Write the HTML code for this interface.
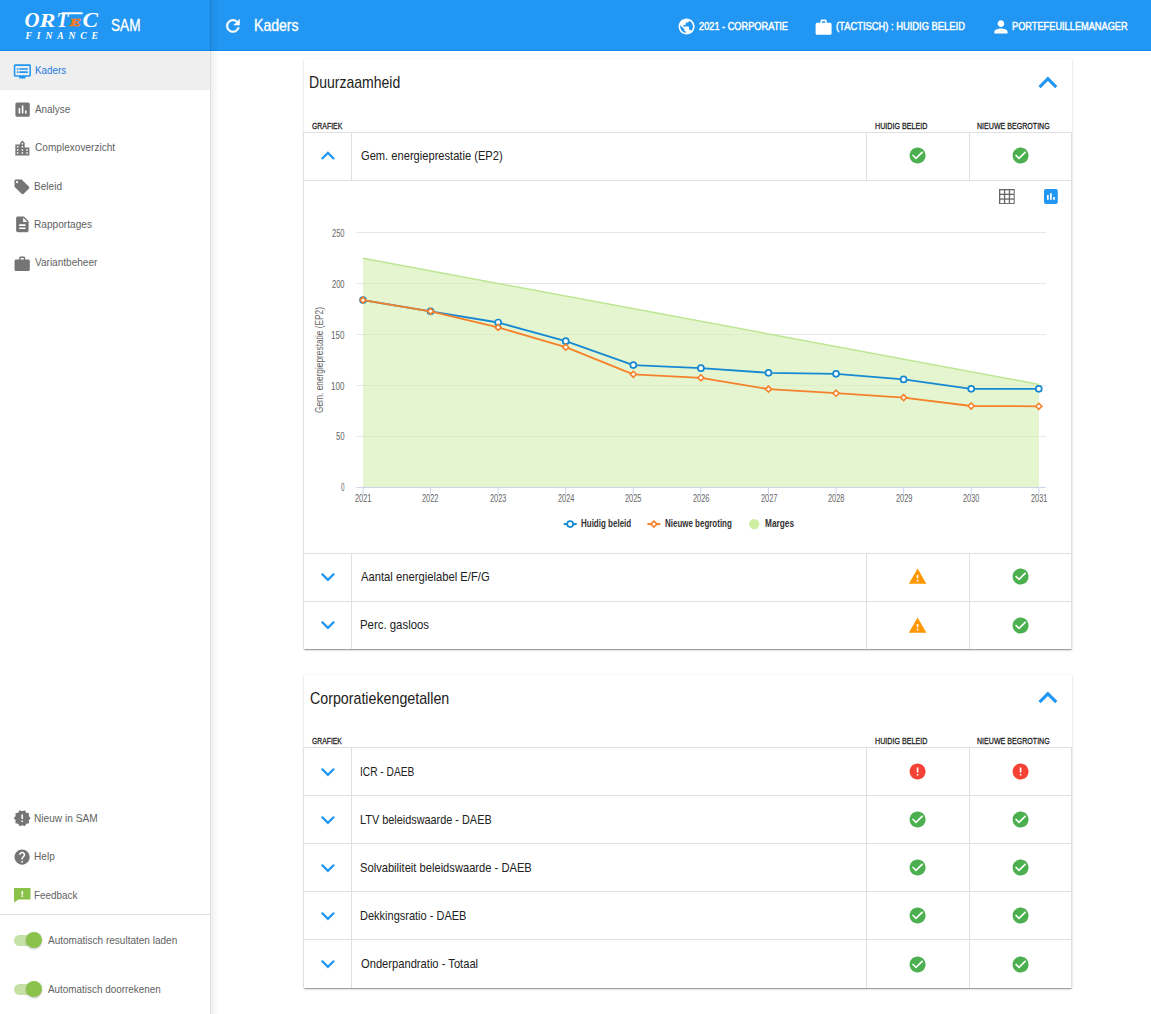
<!DOCTYPE html>
<html><head><meta charset="utf-8"><title>SAM - Kaders</title>
<style>
html,body{margin:0;padding:0;}
body{width:1151px;height:1014px;overflow:hidden;position:relative;background:#fff;font-family:"Liberation Sans",sans-serif;}
.a{position:absolute;}
.t{position:absolute;white-space:pre;line-height:20px;transform-origin:0 0;}
svg{position:absolute;overflow:visible;}
</style></head><body>

<div class="a" style="left:0;top:0;width:1151px;height:50px;background:#2196f3"></div>
<div class="a" style="left:0;top:50px;width:1151px;height:1px;background:#1387e6"></div>
<div class="a" style="left:0;top:51px;width:210px;height:963px;background:#fff"></div>
<div class="a" style="left:0;top:51px;width:210px;height:39px;background:#efefef"></div>
<div class="a" style="left:210px;top:0;width:1px;height:1014px;background:rgba(0,0,0,0.13)"></div>
<div class="a" style="left:211px;top:0;width:8px;height:1014px;background:linear-gradient(to right,rgba(0,0,0,0.06),rgba(0,0,0,0))"></div>
<div class="a" style="left:0;top:914px;width:210px;height:1px;background:#dedede"></div>
<div class="a" style="left:304px;top:59px;width:768px;height:590px;background:#fff;box-shadow:0 2px 1px -1px rgba(0,0,0,0.2),0 1px 1px 0 rgba(0,0,0,0.14),0 1px 3px 0 rgba(0,0,0,0.12)"></div>
<div class="a" style="left:304px;top:675px;width:768px;height:313px;background:#fff;box-shadow:0 2px 1px -1px rgba(0,0,0,0.2),0 1px 1px 0 rgba(0,0,0,0.14),0 1px 3px 0 rgba(0,0,0,0.12)"></div>
<div class="a" style="left:303px;top:132px;width:769px;height:1px;background:#e0e0e0"></div>
<div class="a" style="left:303px;top:180px;width:769px;height:1px;background:#e0e0e0"></div>
<div class="a" style="left:303px;top:553px;width:769px;height:1px;background:#e0e0e0"></div>
<div class="a" style="left:303px;top:601px;width:769px;height:1px;background:#e0e0e0"></div>
<div class="a" style="left:303px;top:132px;width:1px;height:48px;background:#e0e0e0"></div>
<div class="a" style="left:351px;top:132px;width:1px;height:48px;background:#e0e0e0"></div>
<div class="a" style="left:866px;top:132px;width:1px;height:48px;background:#e0e0e0"></div>
<div class="a" style="left:969px;top:132px;width:1px;height:48px;background:#e0e0e0"></div>
<div class="a" style="left:1071px;top:132px;width:1px;height:48px;background:#e0e0e0"></div>
<div class="a" style="left:303px;top:553px;width:1px;height:96px;background:#e0e0e0"></div>
<div class="a" style="left:351px;top:553px;width:1px;height:96px;background:#e0e0e0"></div>
<div class="a" style="left:866px;top:553px;width:1px;height:96px;background:#e0e0e0"></div>
<div class="a" style="left:969px;top:553px;width:1px;height:96px;background:#e0e0e0"></div>
<div class="a" style="left:1071px;top:553px;width:1px;height:96px;background:#e0e0e0"></div>
<div class="a" style="left:303px;top:180px;width:1px;height:373px;background:#e0e0e0"></div>
<div class="a" style="left:1071px;top:180px;width:1px;height:373px;background:#e0e0e0"></div>
<div class="a" style="left:303px;top:747px;width:769px;height:1px;background:#e0e0e0"></div>
<div class="a" style="left:303px;top:795px;width:769px;height:1px;background:#e0e0e0"></div>
<div class="a" style="left:303px;top:843px;width:769px;height:1px;background:#e0e0e0"></div>
<div class="a" style="left:303px;top:891px;width:769px;height:1px;background:#e0e0e0"></div>
<div class="a" style="left:303px;top:939px;width:769px;height:1px;background:#e0e0e0"></div>
<div class="a" style="left:303px;top:747px;width:1px;height:241px;background:#e0e0e0"></div>
<div class="a" style="left:351px;top:747px;width:1px;height:241px;background:#e0e0e0"></div>
<div class="a" style="left:866px;top:747px;width:1px;height:241px;background:#e0e0e0"></div>
<div class="a" style="left:969px;top:747px;width:1px;height:241px;background:#e0e0e0"></div>
<div class="a" style="left:1071px;top:747px;width:1px;height:241px;background:#e0e0e0"></div>
<svg style="left:223px;top:15.7px" width="19.92" height="19.92" viewBox="0 0 24 24"><path d="M17.65 6.35C16.2 4.9 14.21 4 12 4c-4.42 0-7.99 3.58-7.99 8s3.57 8 7.99 8c3.73 0 6.84-2.55 7.73-6h-2.08c-.82 2.33-3.04 4-5.65 4-3.31 0-6-2.69-6-6s2.69-6 6-6c1.66 0 3.14.69 4.22 1.78L13 11h7V4l-2.35 2.35z" fill="#fff" stroke="#fff" stroke-width="0.6"/></svg>
<svg style="left:676.9px;top:17.4px" width="19.2" height="19.2" viewBox="0 0 24 24"><path d="M12 2C6.48 2 2 6.48 2 12s4.48 10 10 10 10-4.48 10-10S17.52 2 12 2zm-1 17.93c-3.95-.49-7-3.85-7-7.93 0-.62.08-1.21.21-1.79L9 15v1c0 1.1.9 2 2 2v1.93zm6.9-2.54c-.26-.81-1-1.39-1.9-1.39h-1v-3c0-.55-.45-1-1-1H8v-2h2c.55 0 1-.45 1-1V7h2c1.1 0 2-.9 2-2v-.41c2.93 1.19 5 4.06 5 7.41 0 2.08-.8 3.97-2.1 5.39z" fill="#fff"/></svg>
<svg style="left:813.9px;top:17.5px" width="19.2" height="19.2" viewBox="0 0 24 24"><path d="M20 6h-4V4c0-1.11-.89-2-2-2h-4c-1.11 0-2 .89-2 2v2H4c-1.11 0-1.99.89-1.99 2L2 19c0 1.11.89 2 2 2h16c1.11 0 2-.89 2-2V8c0-1.11-.89-2-2-2zm-6 0h-4V4h4v2z" fill="#fff"/></svg>
<svg style="left:990.7px;top:16.7px" width="19.92" height="19.92" viewBox="0 0 24 24"><path d="M12 12c2.21 0 4-1.79 4-4s-1.79-4-4-4-4 1.79-4 4 1.79 4 4 4zm0 2c-2.67 0-8 1.34-8 4v2h16v-2c0-2.66-5.33-4-8-4z" fill="#fff"/></svg>
<svg style="left:13.2px;top:61.6px" width="18.72" height="18.72" viewBox="0 0 24 24"><path d="M21 3H3c-1.1 0-2 .9-2 2v12c0 1.1.9 2 2 2h5v2h8v-2h5c1.1 0 1.99-.9 1.99-2L23 5c0-1.1-.9-2-2-2zm0 14H3V5h18v12zm-2-9H8v2h11V8zm0 4H8v2h11v-2zM7 8H5v2h2V8zm0 4H5v2h2v-2z" fill="#2196f3"/></svg>
<svg style="left:12.6px;top:99.6px" width="19.2" height="19.2" viewBox="0 0 24 24"><path d="M19 3H5c-1.1 0-2 .9-2 2v14c0 1.1.9 2 2 2h14c1.1 0 2-.9 2-2V5c0-1.1-.9-2-2-2zM9 17H7v-7h2v7zm4 0h-2V7h2v10zm4 0h-2v-4h2v4z" fill="#757575"/></svg>
<svg style="left:13px;top:139.1px" width="18.72" height="18.72" viewBox="0 0 24 24"><path d="M15 11V5l-3-3-3 3v2H3v14h18V11h-6zm-8 8H5v-2h2v2zm0-4H5v-2h2v2zm0-4H5V9h2v2zm6 8h-2v-2h2v2zm0-4h-2v-2h2v2zm0-4h-2V9h2v2zm0-4h-2V5h2v2zm6 12h-2v-2h2v2zm0-4h-2v-2h2v2z" fill="#757575"/></svg>
<svg style="left:13.4px;top:177.6px" width="17.76" height="17.76" viewBox="0 0 24 24"><path d="M21.41 11.58l-9-9C12.05 2.22 11.55 2 11 2H4c-1.1 0-2 .9-2 2v7c0 .55.22 1.05.59 1.42l9 9c.36.36.86.58 1.41.58.55 0 1.05-.22 1.41-.59l7-7c.37-.36.59-.86.59-1.41 0-.55-.23-1.06-.59-1.42zM5.5 7C4.67 7 4 6.33 4 5.5S4.67 4 5.5 4 7 4.67 7 5.5 6.33 7 5.5 7z" fill="#757575"/></svg>
<svg style="left:12.9px;top:215.3px" width="18.72" height="18.72" viewBox="0 0 24 24"><path d="M14 2H6c-1.1 0-1.99.9-1.99 2L4 20c0 1.1.89 2 1.99 2H18c1.1 0 2-.9 2-2V8l-6-6zm2 16H8v-2h8v2zm0-4H8v-2h8v2zm-3-5V3.5L18.5 9H13z" fill="#757575"/></svg>
<svg style="left:13.2px;top:254.5px" width="18.36" height="18.36" viewBox="0 0 24 24"><path d="M20 6h-4V4c0-1.11-.89-2-2-2h-4c-1.11 0-2 .89-2 2v2H4c-1.11 0-1.99.89-1.99 2L2 19c0 1.11.89 2 2 2h16c1.11 0 2-.89 2-2V8c0-1.11-.89-2-2-2zm-6 0h-4V4h4v2z" fill="#757575"/></svg>
<svg style="left:13.2px;top:808.8px" width="18.48" height="18.48" viewBox="0 0 24 24"><path d="M23 12l-2.44-2.78.34-3.68-3.61-.82-1.89-3.18L12 3 8.6 1.54 6.71 4.72l-3.61.81.34 3.68L1 12l2.44 2.78-.34 3.69 3.61.82 1.89 3.18L12 21l3.4 1.46 1.89-3.18 3.61-.82-.34-3.68L23 12zm-10 5h-2v-2h2v2zm0-4h-2V7h2v6z" fill="#757575"/></svg>
<svg style="left:13px;top:848.2px" width="18.24" height="18.24" viewBox="0 0 24 24"><path d="M12 2C6.48 2 2 6.48 2 12s4.48 10 10 10 10-4.48 10-10S17.52 2 12 2zm1 17h-2v-2h2v2zm2.07-7.75l-.9.92C13.45 12.9 13 13.5 13 15h-2v-.5c0-1.1.45-2.1 1.17-2.83l1.24-1.26c.37-.36.59-.86.59-1.41 0-1.1-.9-2-2-2s-2 .9-2 2H8c0-2.21 1.79-4 4-4s4 1.79 4 4c0 .88-.36 1.68-.93 2.25z" fill="#757575"/></svg>
<svg style="left:0;top:0" width="1" height="1"></svg>
<svg style="left:14px;top:888px" width="17" height="15" viewBox="0 0 17 15"><path d="M0 0H16.5V11.5H4.5L0 14.5Z" fill="#8bc34a"/><rect x="7.5" y="3.1" width="1.6" height="3.5" fill="#fff"/><rect x="7.5" y="7.5" width="1.6" height="1.4" fill="#fff"/></svg>
<div class="a" style="left:14px;top:934.5px;width:26px;height:11px;border-radius:6px;background:#c5e1a5"></div>
<div class="a" style="left:26px;top:932px;width:16px;height:16px;border-radius:8px;background:#8bc34a;box-shadow:0 1px 2px rgba(0,0,0,0.25)"></div>
<div class="a" style="left:14px;top:983.5px;width:26px;height:11px;border-radius:6px;background:#c5e1a5"></div>
<div class="a" style="left:26px;top:981px;width:16px;height:16px;border-radius:8px;background:#8bc34a;box-shadow:0 1px 2px rgba(0,0,0,0.25)"></div>
<svg style="left:1028.75px;top:64.2px" width="37.8" height="37.8" viewBox="0 0 24 24"><path d="M12 8l-6 6 1.41 1.41L12 10.83l4.59 4.58L18 14z" fill="#2196f3"/></svg>
<svg style="left:1028.75px;top:678.6px" width="37.8" height="37.8" viewBox="0 0 24 24"><path d="M12 8l-6 6 1.41 1.41L12 10.83l4.59 4.58L18 14z" fill="#2196f3"/></svg>
<svg style="left:313.7px;top:141.7px" width="27.84" height="27.84" viewBox="0 0 24 24"><path d="M12 8l-6 6 1.41 1.41L12 10.83l4.59 4.58L18 14z" fill="#2196f3"/></svg>
<svg style="left:313.8px;top:562.54px" width="27.84" height="27.84" viewBox="0 0 24 24"><path d="M16.59 8.59L12 13.17 7.41 8.59 6 10l6 6 6-6z" fill="#2196f3"/></svg>
<svg style="left:313.8px;top:610.54px" width="27.84" height="27.84" viewBox="0 0 24 24"><path d="M16.59 8.59L12 13.17 7.41 8.59 6 10l6 6 6-6z" fill="#2196f3"/></svg>
<svg style="left:313.8px;top:757.54px" width="27.84" height="27.84" viewBox="0 0 24 24"><path d="M16.59 8.59L12 13.17 7.41 8.59 6 10l6 6 6-6z" fill="#2196f3"/></svg>
<svg style="left:313.8px;top:805.54px" width="27.84" height="27.84" viewBox="0 0 24 24"><path d="M16.59 8.59L12 13.17 7.41 8.59 6 10l6 6 6-6z" fill="#2196f3"/></svg>
<svg style="left:313.8px;top:853.54px" width="27.84" height="27.84" viewBox="0 0 24 24"><path d="M16.59 8.59L12 13.17 7.41 8.59 6 10l6 6 6-6z" fill="#2196f3"/></svg>
<svg style="left:313.8px;top:901.54px" width="27.84" height="27.84" viewBox="0 0 24 24"><path d="M16.59 8.59L12 13.17 7.41 8.59 6 10l6 6 6-6z" fill="#2196f3"/></svg>
<svg style="left:313.8px;top:949.54px" width="27.84" height="27.84" viewBox="0 0 24 24"><path d="M16.59 8.59L12 13.17 7.41 8.59 6 10l6 6 6-6z" fill="#2196f3"/></svg>
<svg style="left:908.4px;top:145.8px" width="19.2" height="19.2" viewBox="0 0 24 24"><path d="M12 2C6.48 2 2 6.48 2 12s4.48 10 10 10 10-4.48 10-10S17.52 2 12 2zm-2 15l-5-5 1.41-1.41L10 14.17l7.59-7.59L19 8l-9 9z" fill="#4caf50"/></svg>
<svg style="left:1010.9px;top:145.8px" width="19.2" height="19.2" viewBox="0 0 24 24"><path d="M12 2C6.48 2 2 6.48 2 12s4.48 10 10 10 10-4.48 10-10S17.52 2 12 2zm-2 15l-5-5 1.41-1.41L10 14.17l7.59-7.59L19 8l-9 9z" fill="#4caf50"/></svg>
<svg style="left:908.4px;top:567.2px" width="19.2" height="19.2" viewBox="0 0 24 24"><path d="M1 21h22L12 2 1 21zm12-3h-2v-2h2v2zm0-4h-2v-4h2v4z" fill="#ff9800"/></svg>
<svg style="left:1010.9px;top:566.8px" width="19.2" height="19.2" viewBox="0 0 24 24"><path d="M12 2C6.48 2 2 6.48 2 12s4.48 10 10 10 10-4.48 10-10S17.52 2 12 2zm-2 15l-5-5 1.41-1.41L10 14.17l7.59-7.59L19 8l-9 9z" fill="#4caf50"/></svg>
<svg style="left:908.4px;top:616.2px" width="19.2" height="19.2" viewBox="0 0 24 24"><path d="M1 21h22L12 2 1 21zm12-3h-2v-2h2v2zm0-4h-2v-4h2v4z" fill="#ff9800"/></svg>
<svg style="left:1010.9px;top:615.8px" width="19.2" height="19.2" viewBox="0 0 24 24"><path d="M12 2C6.48 2 2 6.48 2 12s4.48 10 10 10 10-4.48 10-10S17.52 2 12 2zm-2 15l-5-5 1.41-1.41L10 14.17l7.59-7.59L19 8l-9 9z" fill="#4caf50"/></svg>
<svg style="left:908.4px;top:761.8px" width="19.2" height="19.2" viewBox="0 0 24 24"><path d="M12 2C6.48 2 2 6.48 2 12s4.48 10 10 10 10-4.48 10-10S17.52 2 12 2zm1 15h-2v-2h2v2zm0-4h-2V7h2v6z" fill="#f44336"/></svg>
<svg style="left:1010.9px;top:761.8px" width="19.2" height="19.2" viewBox="0 0 24 24"><path d="M12 2C6.48 2 2 6.48 2 12s4.48 10 10 10 10-4.48 10-10S17.52 2 12 2zm1 15h-2v-2h2v2zm0-4h-2V7h2v6z" fill="#f44336"/></svg>
<svg style="left:908.4px;top:809.9px" width="19.2" height="19.2" viewBox="0 0 24 24"><path d="M12 2C6.48 2 2 6.48 2 12s4.48 10 10 10 10-4.48 10-10S17.52 2 12 2zm-2 15l-5-5 1.41-1.41L10 14.17l7.59-7.59L19 8l-9 9z" fill="#4caf50"/></svg>
<svg style="left:1010.9px;top:809.9px" width="19.2" height="19.2" viewBox="0 0 24 24"><path d="M12 2C6.48 2 2 6.48 2 12s4.48 10 10 10 10-4.48 10-10S17.52 2 12 2zm-2 15l-5-5 1.41-1.41L10 14.17l7.59-7.59L19 8l-9 9z" fill="#4caf50"/></svg>
<svg style="left:908.4px;top:857.9px" width="19.2" height="19.2" viewBox="0 0 24 24"><path d="M12 2C6.48 2 2 6.48 2 12s4.48 10 10 10 10-4.48 10-10S17.52 2 12 2zm-2 15l-5-5 1.41-1.41L10 14.17l7.59-7.59L19 8l-9 9z" fill="#4caf50"/></svg>
<svg style="left:1010.9px;top:857.9px" width="19.2" height="19.2" viewBox="0 0 24 24"><path d="M12 2C6.48 2 2 6.48 2 12s4.48 10 10 10 10-4.48 10-10S17.52 2 12 2zm-2 15l-5-5 1.41-1.41L10 14.17l7.59-7.59L19 8l-9 9z" fill="#4caf50"/></svg>
<svg style="left:908.4px;top:905.9px" width="19.2" height="19.2" viewBox="0 0 24 24"><path d="M12 2C6.48 2 2 6.48 2 12s4.48 10 10 10 10-4.48 10-10S17.52 2 12 2zm-2 15l-5-5 1.41-1.41L10 14.17l7.59-7.59L19 8l-9 9z" fill="#4caf50"/></svg>
<svg style="left:1010.9px;top:905.9px" width="19.2" height="19.2" viewBox="0 0 24 24"><path d="M12 2C6.48 2 2 6.48 2 12s4.48 10 10 10 10-4.48 10-10S17.52 2 12 2zm-2 15l-5-5 1.41-1.41L10 14.17l7.59-7.59L19 8l-9 9z" fill="#4caf50"/></svg>
<svg style="left:908.4px;top:954.5px" width="19.2" height="19.2" viewBox="0 0 24 24"><path d="M12 2C6.48 2 2 6.48 2 12s4.48 10 10 10 10-4.48 10-10S17.52 2 12 2zm-2 15l-5-5 1.41-1.41L10 14.17l7.59-7.59L19 8l-9 9z" fill="#4caf50"/></svg>
<svg style="left:1010.9px;top:954.5px" width="19.2" height="19.2" viewBox="0 0 24 24"><path d="M12 2C6.48 2 2 6.48 2 12s4.48 10 10 10 10-4.48 10-10S17.52 2 12 2zm-2 15l-5-5 1.41-1.41L10 14.17l7.59-7.59L19 8l-9 9z" fill="#4caf50"/></svg>
<svg style="left:999px;top:189px" width="16" height="15" viewBox="0 0 16 15"><rect x="0" y="0" width="15.7" height="15" fill="#666"/><rect x="1.3" y="1.3" width="3.6" height="3.4" fill="#fff"/><rect x="1.3" y="6" width="3.6" height="3.4" fill="#fff"/><rect x="1.3" y="10.7" width="3.6" height="3.4" fill="#fff"/><rect x="6.2" y="1.3" width="3.6" height="3.4" fill="#fff"/><rect x="6.2" y="6" width="3.6" height="3.4" fill="#fff"/><rect x="6.2" y="10.7" width="3.6" height="3.4" fill="#fff"/><rect x="11.1" y="1.3" width="3.6" height="3.4" fill="#fff"/><rect x="11.1" y="6" width="3.6" height="3.4" fill="#fff"/><rect x="11.1" y="10.7" width="3.6" height="3.4" fill="#fff"/></svg>
<svg style="left:1044px;top:189px" width="14" height="15" viewBox="0 0 14 15"><rect x="0" y="0" width="13.8" height="15" rx="2" fill="#2196f3"/><rect x="3" y="5.9" width="1.7" height="4.9" fill="#fff"/><rect x="6.1" y="4.2" width="1.7" height="6.6" fill="#fff"/><rect x="9.2" y="8" width="1.7" height="2.8" fill="#fff"/></svg>
<svg style="left:0;top:0" width="1151" height="1014" viewBox="0 0 1151 1014"><path d="M356.5 436.5 H1046" stroke="#e6e6e6" stroke-width="1"/><path d="M356.5 385.5 H1046" stroke="#e6e6e6" stroke-width="1"/><path d="M356.5 334.5 H1046" stroke="#e6e6e6" stroke-width="1"/><path d="M356.5 283.5 H1046" stroke="#e6e6e6" stroke-width="1"/><path d="M356.5 232.5 H1046" stroke="#e6e6e6" stroke-width="1"/><path d="M363 258.2 L1039 384.4 V487 H363 Z" fill="rgb(217,240,186)" fill-opacity="0.68"/><path d="M363 258.2 L1039 384.4" stroke="#bde692" stroke-width="1.5" fill="none"/><path d="M356.5 487.5 H1046" stroke="#ccd6eb" stroke-width="1"/><path d="M363 488 V494.5" stroke="#ccd6eb" stroke-width="1"/><path d="M430.58 488 V494.5" stroke="#ccd6eb" stroke-width="1"/><path d="M498.16 488 V494.5" stroke="#ccd6eb" stroke-width="1"/><path d="M565.74 488 V494.5" stroke="#ccd6eb" stroke-width="1"/><path d="M633.32 488 V494.5" stroke="#ccd6eb" stroke-width="1"/><path d="M700.9 488 V494.5" stroke="#ccd6eb" stroke-width="1"/><path d="M768.48 488 V494.5" stroke="#ccd6eb" stroke-width="1"/><path d="M836.06 488 V494.5" stroke="#ccd6eb" stroke-width="1"/><path d="M903.64 488 V494.5" stroke="#ccd6eb" stroke-width="1"/><path d="M971.22 488 V494.5" stroke="#ccd6eb" stroke-width="1"/><path d="M1038.8 488 V494.5" stroke="#ccd6eb" stroke-width="1"/><polyline points="363,300.1 430.58,311.3 498.16,322.5 565.74,341.2 633.32,365.1 700.9,368.2 768.48,372.8 836.06,373.8 903.64,379.4 971.22,388.8 1038.8,388.8" fill="none" stroke="#1689d2" stroke-width="1.8" stroke-linejoin="round"/><circle cx="363" cy="300.1" r="3" fill="#fff" stroke="#1689d2" stroke-width="1.7"/><circle cx="430.58" cy="311.3" r="3" fill="#fff" stroke="#1689d2" stroke-width="1.7"/><circle cx="498.16" cy="322.5" r="3" fill="#fff" stroke="#1689d2" stroke-width="1.7"/><circle cx="565.74" cy="341.2" r="3" fill="#fff" stroke="#1689d2" stroke-width="1.7"/><circle cx="633.32" cy="365.1" r="3" fill="#fff" stroke="#1689d2" stroke-width="1.7"/><circle cx="700.9" cy="368.2" r="3" fill="#fff" stroke="#1689d2" stroke-width="1.7"/><circle cx="768.48" cy="372.8" r="3" fill="#fff" stroke="#1689d2" stroke-width="1.7"/><circle cx="836.06" cy="373.8" r="3" fill="#fff" stroke="#1689d2" stroke-width="1.7"/><circle cx="903.64" cy="379.4" r="3" fill="#fff" stroke="#1689d2" stroke-width="1.7"/><circle cx="971.22" cy="388.8" r="3" fill="#fff" stroke="#1689d2" stroke-width="1.7"/><circle cx="1038.8" cy="388.8" r="3" fill="#fff" stroke="#1689d2" stroke-width="1.7"/><polyline points="363,300.1 430.58,311.3 498.16,327.4 565.74,347.2 633.32,374.3 700.9,377.8 768.48,389.1 836.06,393.2 903.64,397.6 971.22,406 1038.8,406.3" fill="none" stroke="#f5812a" stroke-width="1.8" stroke-linejoin="round"/><path d="M363 297.1 l3 3 l-3 3 l-3 -3 Z" fill="#fff" stroke="#f5812a" stroke-width="1.6"/><path d="M430.58 308.3 l3 3 l-3 3 l-3 -3 Z" fill="#fff" stroke="#f5812a" stroke-width="1.6"/><path d="M498.16 324.4 l3 3 l-3 3 l-3 -3 Z" fill="#fff" stroke="#f5812a" stroke-width="1.6"/><path d="M565.74 344.2 l3 3 l-3 3 l-3 -3 Z" fill="#fff" stroke="#f5812a" stroke-width="1.6"/><path d="M633.32 371.3 l3 3 l-3 3 l-3 -3 Z" fill="#fff" stroke="#f5812a" stroke-width="1.6"/><path d="M700.9 374.8 l3 3 l-3 3 l-3 -3 Z" fill="#fff" stroke="#f5812a" stroke-width="1.6"/><path d="M768.48 386.1 l3 3 l-3 3 l-3 -3 Z" fill="#fff" stroke="#f5812a" stroke-width="1.6"/><path d="M836.06 390.2 l3 3 l-3 3 l-3 -3 Z" fill="#fff" stroke="#f5812a" stroke-width="1.6"/><path d="M903.64 394.6 l3 3 l-3 3 l-3 -3 Z" fill="#fff" stroke="#f5812a" stroke-width="1.6"/><path d="M971.22 403 l3 3 l-3 3 l-3 -3 Z" fill="#fff" stroke="#f5812a" stroke-width="1.6"/><path d="M1038.8 403.3 l3 3 l-3 3 l-3 -3 Z" fill="#fff" stroke="#f5812a" stroke-width="1.6"/><path d="M563.7 524.1 H576.7" stroke="#1689d2" stroke-width="2"/><circle cx="570.2" cy="524.1" r="3" fill="#fff" stroke="#1689d2" stroke-width="1.7"/><path d="M647.4 524.1 H660.4" stroke="#f5812a" stroke-width="2"/><path d="M653.9 521.1 l3 3 l-3 3 l-3 -3 Z" fill="#fff" stroke="#f5812a" stroke-width="1.6"/><circle cx="754.2" cy="524.1" r="5.2" fill="#cdeea2"/><text transform="translate(323.3 360) rotate(-90)" text-anchor="middle" font-family="Liberation Sans" font-size="10" fill="#666" textLength="106" lengthAdjust="spacingAndGlyphs">Gem. energieprestatie (EP2)</text></svg>
<svg style="left:0;top:0" width="150" height="50" viewBox="0 0 150 50"><text x="24.5" y="26.8" font-family="Liberation Serif" font-weight="bold" font-style="italic" font-size="21" fill="#fff" textLength="15" lengthAdjust="spacingAndGlyphs">O</text><text x="39.5" y="26.8" font-family="Liberation Serif" font-weight="bold" font-style="italic" font-size="18.5" fill="#fff" textLength="16" lengthAdjust="spacingAndGlyphs">R</text><text x="56.5" y="26.8" font-family="Liberation Serif" font-weight="bold" font-style="italic" font-size="21" fill="#fff" textLength="12" lengthAdjust="spacingAndGlyphs">T</text><path d="M62 12.2 H82.8 L82.4 14.3 H62 Z" fill="#fff"/><text x="69.8" y="26.4" font-family="Liberation Serif" font-weight="bold" font-style="italic" font-size="9.3" fill="#f47b20" stroke="#f47b20" stroke-width="0.7" textLength="11.2" lengthAdjust="spacingAndGlyphs">E</text><text x="82.5" y="26.8" font-family="Liberation Serif" font-weight="bold" font-style="italic" font-size="21" fill="#fff" textLength="15.5" lengthAdjust="spacingAndGlyphs">C</text><text x="25.5" y="38.6" font-family="Liberation Serif" font-weight="bold" font-style="italic" font-size="9.6" fill="#fff" textLength="72.5" lengthAdjust="spacing">FINANCE</text></svg>
<div class="t" style="left:111.2px;top:15.8px;font-size:17px;font-weight:normal;color:#fff;transform:scaleX(0.8000);-webkit-text-stroke:0.35px #fff">SAM</div>
<div class="t" style="left:254px;top:16px;font-size:17px;font-weight:normal;color:#fff;transform:scaleX(0.8269);-webkit-text-stroke:0.35px #fff">Kaders</div>
<div class="t" style="left:698.83px;top:15.9px;font-size:11.2px;font-weight:normal;color:#fff;transform:scaleX(0.8241);-webkit-text-stroke:0.45px #fff">2021 - CORPORATIE</div>
<div class="t" style="left:835.65px;top:15.9px;font-size:11.2px;font-weight:normal;color:#fff;transform:scaleX(0.8377);-webkit-text-stroke:0.45px #fff">(TACTISCH) : HUIDIG BELEID</div>
<div class="t" style="left:1011.93px;top:15.9px;font-size:11.2px;font-weight:normal;color:#fff;transform:scaleX(0.8245);-webkit-text-stroke:0.45px #fff">PORTEFEUILLEMANAGER</div>
<div class="t" style="left:34.57px;top:59.9px;font-size:11.6px;font-weight:normal;color:#1f7ae0;transform:scaleX(0.8472)">Kaders</div>
<div class="t" style="left:35px;top:99px;font-size:11.6px;font-weight:normal;color:#5f5f5f;transform:scaleX(0.8537)">Analyse</div>
<div class="t" style="left:35px;top:136.9px;font-size:11.6px;font-weight:normal;color:#5f5f5f;transform:scaleX(0.8696)">Complexoverzicht</div>
<div class="t" style="left:34.3px;top:175.7px;font-size:11.6px;font-weight:normal;color:#5f5f5f;transform:scaleX(0.8710)">Beleid</div>
<div class="t" style="left:34.27px;top:214px;font-size:11.6px;font-weight:normal;color:#5f5f5f;transform:scaleX(0.8738)">Rapportages</div>
<div class="t" style="left:34.9px;top:252px;font-size:11.6px;font-weight:normal;color:#5f5f5f;transform:scaleX(0.8667)">Variantbeheer</div>
<div class="t" style="left:34.3px;top:807.9px;font-size:11.6px;font-weight:normal;color:#5f5f5f;transform:scaleX(0.8732)">Nieuw in SAM</div>
<div class="t" style="left:34.31px;top:846.4px;font-size:11.6px;font-weight:normal;color:#5f5f5f;transform:scaleX(0.8696)">Help</div>
<div class="t" style="left:34.25px;top:884.8px;font-size:11.6px;font-weight:normal;color:#5f5f5f;transform:scaleX(0.8520)">Feedback</div>
<div class="t" style="left:48.23px;top:930px;font-size:11.6px;font-weight:normal;color:#5f5f5f;transform:scaleX(0.8644)">Automatisch resultaten laden</div>
<div class="t" style="left:48.22px;top:978.6px;font-size:11.6px;font-weight:normal;color:#5f5f5f;transform:scaleX(0.8538)">Automatisch doorrekenen</div>
<div class="t" style="left:309.35px;top:72.7px;font-size:17px;font-weight:normal;color:#212121;transform:scaleX(0.8248)">Duurzaamheid</div>
<div class="t" style="left:311.86px;top:115.6px;font-size:9.4px;font-weight:normal;color:#212121;transform:scaleX(0.7366);-webkit-text-stroke:0.3px #212121">GRAFIEK</div>
<div class="t" style="left:874.56px;top:115.9px;font-size:9.8px;font-weight:normal;color:#212121;transform:scaleX(0.7310);-webkit-text-stroke:0.3px #212121">HUIDIG BELEID</div>
<div class="t" style="left:976.96px;top:115.9px;font-size:9.8px;font-weight:normal;color:#212121;transform:scaleX(0.7222);-webkit-text-stroke:0.3px #212121">NIEUWE BEGROTING</div>
<div class="t" style="left:360.54px;top:146.2px;font-size:12.8px;font-weight:normal;color:#212121;transform:scaleX(0.8698)">Gem. energieprestatie (EP2)</div>
<div class="t" style="left:361.04px;top:567px;font-size:12.8px;font-weight:normal;color:#212121;transform:scaleX(0.8781)">Aantal energielabel E/F/G</div>
<div class="t" style="left:360.23px;top:615px;font-size:12.8px;font-weight:normal;color:#212121;transform:scaleX(0.8908)">Perc. gasloos</div>
<div class="t" style="left:309.54px;top:688.9px;font-size:17px;font-weight:normal;color:#212121;transform:scaleX(0.8370)">Corporatiekengetallen</div>
<div class="t" style="left:312.24px;top:731px;font-size:9.4px;font-weight:normal;color:#212121;transform:scaleX(0.7268);-webkit-text-stroke:0.3px #212121">GRAFIEK</div>
<div class="t" style="left:874.56px;top:731.2px;font-size:9.8px;font-weight:normal;color:#212121;transform:scaleX(0.7310);-webkit-text-stroke:0.3px #212121">HUIDIG BELEID</div>
<div class="t" style="left:976.96px;top:731.2px;font-size:9.8px;font-weight:normal;color:#212121;transform:scaleX(0.7222);-webkit-text-stroke:0.3px #212121">NIEUWE BEGROTING</div>
<div class="t" style="left:360.16px;top:762px;font-size:12.8px;font-weight:normal;color:#212121;transform:scaleX(0.7955)">ICR - DAEB</div>
<div class="t" style="left:360.17px;top:809.5px;font-size:12.8px;font-weight:normal;color:#212121;transform:scaleX(0.8503)">LTV beleidswaarde - DAEB</div>
<div class="t" style="left:360.28px;top:857.5px;font-size:12.8px;font-weight:normal;color:#212121;transform:scaleX(0.8719)">Solvabiliteit beleidswaarde - DAEB</div>
<div class="t" style="left:360.3px;top:905.7px;font-size:12.8px;font-weight:normal;color:#212121;transform:scaleX(0.8598)">Dekkingsratio - DAEB</div>
<div class="t" style="left:360.98px;top:953.5px;font-size:12.8px;font-weight:normal;color:#212121;transform:scaleX(0.8724)">Onderpandratio - Totaal</div>
<div class="t" style="left:581px;top:514px;font-size:10.4px;font-weight:bold;color:#333;transform:scaleX(0.7692)">Huidig beleid</div>
<div class="t" style="left:664.67px;top:514px;font-size:10.4px;font-weight:bold;color:#333;transform:scaleX(0.7667)">Nieuwe begroting</div>
<div class="t" style="left:764.67px;top:514px;font-size:10.4px;font-weight:bold;color:#333;transform:scaleX(0.7972)">Marges</div>
<div class="t" style="left:331.96px;top:223.95px;font-size:10px;font-weight:normal;color:#666;transform:scaleX(0.7529)">250</div>
<div class="t" style="left:331.96px;top:274.8px;font-size:10px;font-weight:normal;color:#666;transform:scaleX(0.7529)">200</div>
<div class="t" style="left:331.34px;top:325.65px;font-size:10px;font-weight:normal;color:#666;transform:scaleX(0.8000)">150</div>
<div class="t" style="left:331.34px;top:376.5px;font-size:10px;font-weight:normal;color:#666;transform:scaleX(0.8000)">100</div>
<div class="t" style="left:336.2px;top:427.35px;font-size:10px;font-weight:normal;color:#666;transform:scaleX(0.7818)">50</div>
<div class="t" style="left:340.96px;top:478.2px;font-size:10px;font-weight:normal;color:#666;transform:scaleX(0.6333)">0</div>
<div class="t" style="left:355.04px;top:488.8px;font-size:10px;font-weight:normal;color:#666;transform:scaleX(0.7364)">2021</div>
<div class="t" style="left:422.47px;top:488.8px;font-size:10px;font-weight:normal;color:#666;transform:scaleX(0.7364)">2022</div>
<div class="t" style="left:490.25px;top:488.8px;font-size:10px;font-weight:normal;color:#666;transform:scaleX(0.7364)">2023</div>
<div class="t" style="left:557.51px;top:488.8px;font-size:10px;font-weight:normal;color:#666;transform:scaleX(0.7364)">2024</div>
<div class="t" style="left:625.47px;top:488.8px;font-size:10px;font-weight:normal;color:#666;transform:scaleX(0.7364)">2025</div>
<div class="t" style="left:692.9px;top:488.8px;font-size:10px;font-weight:normal;color:#666;transform:scaleX(0.7364)">2026</div>
<div class="t" style="left:760.69px;top:488.8px;font-size:10px;font-weight:normal;color:#666;transform:scaleX(0.7364)">2027</div>
<div class="t" style="left:828.12px;top:488.8px;font-size:10px;font-weight:normal;color:#666;transform:scaleX(0.7364)">2028</div>
<div class="t" style="left:895.55px;top:488.8px;font-size:10px;font-weight:normal;color:#666;transform:scaleX(0.7364)">2029</div>
<div class="t" style="left:963.33px;top:488.8px;font-size:10px;font-weight:normal;color:#666;transform:scaleX(0.7364)">2030</div>
<div class="t" style="left:1030.77px;top:488.8px;font-size:10px;font-weight:normal;color:#666;transform:scaleX(0.7364)">2031</div>
</body></html>
